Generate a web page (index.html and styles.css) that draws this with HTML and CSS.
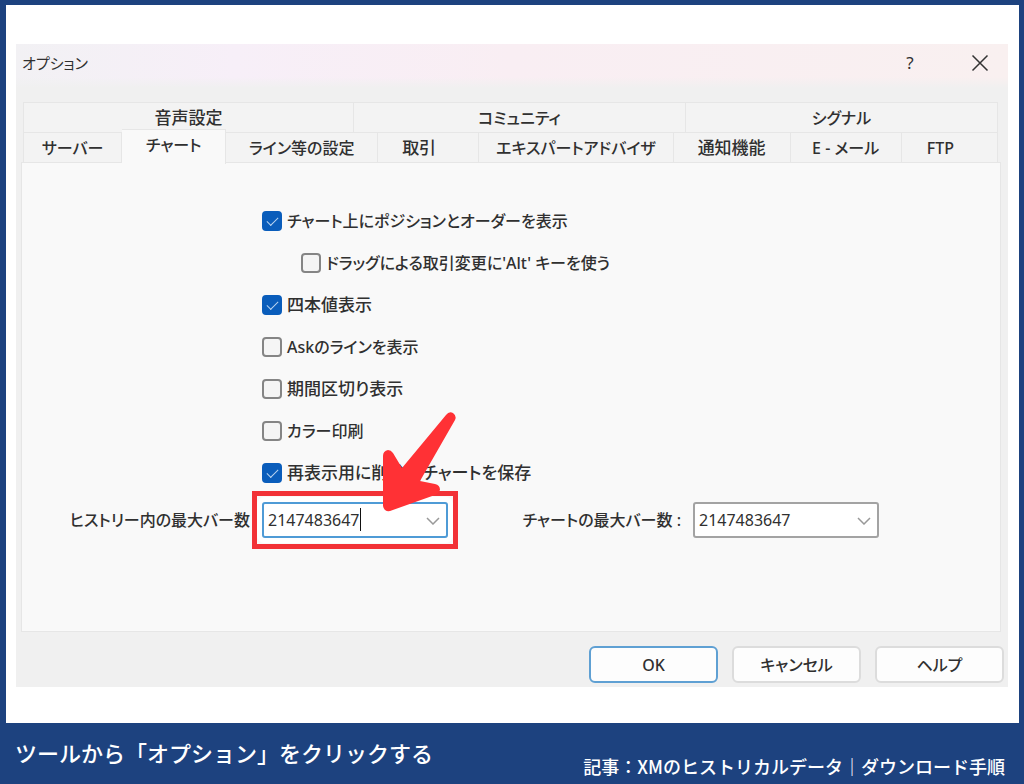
FILE: index.html
```html
<!DOCTYPE html>
<html lang="ja">
<head>
    <meta charset="UTF-8">
    <meta name="viewport" content="width=device-width, initial-scale=1.0">
    <title>オプション</title>
    <link rel="stylesheet" href="styles.css">
</head>
<body>
    <main class="frame">
        <section class="dialog">
            <header class="titlebar">
                <h1>オプション</h1>
                <button type="button" class="title-btn">?</button>
                <button type="button" class="title-btn" aria-label="閉じる">
                    <svg width="18" height="18" viewBox="0 0 18 18"><path d="M1.5 1.5L16.5 16.5M16.5 1.5L1.5 16.5"/></svg>
                </button>
            </header>

            <div class="tabs" role="tablist">
                <div class="tab-row">
                    <button type="button" role="tab" class="tab w-sound kanji">音声設定</button>
                    <button type="button" role="tab" class="tab w-community">コミュニティ</button>
                    <button type="button" role="tab" class="tab w-signal">シグナル</button>
                </div>
                <div class="tab-row">
                    <button type="button" role="tab" class="tab w-server">サーバー</button>
                    <button type="button" role="tab" class="tab w-chart active" aria-selected="true">チャート</button>
                    <button type="button" role="tab" class="tab w-line">ライン等の設定</button>
                    <button type="button" role="tab" class="tab w-trade kanji">取引</button>
                    <button type="button" role="tab" class="tab w-expert">エキスパートアドバイザ</button>
                    <button type="button" role="tab" class="tab w-notice kanji">通知機能</button>
                    <button type="button" role="tab" class="tab w-mail">E - メール</button>
                    <button type="button" role="tab" class="tab w-ftp">FTP</button>
                </div>
            </div>

            <div class="panel" role="tabpanel">
                <div class="checks">
                    <label class="check"><input type="checkbox" checked>チャート上にポジションとオーダーを表示</label>
                    <label class="check indent"><input type="checkbox">ドラッグによる取引変更に'Alt' キーを使う</label>
                    <label class="check kanji"><input type="checkbox" checked>四本値表示</label>
                    <label class="check"><input type="checkbox">Askのラインを表示</label>
                    <label class="check kanji"><input type="checkbox">期間区切り表示</label>
                    <label class="check"><input type="checkbox">カラー印刷</label>
                    <label class="check kanji"><input type="checkbox" checked>再表示用に削除済チャートを保存</label>
                </div>

                <label class="field-label" for="history-bars">ヒストリー内の最大バー数</label>
                <div class="combo focused">
                    <input type="text" id="history-bars" value="2147483647">
                    <span class="caret"></span>
                    <svg class="chevron" width="14" height="8" viewBox="0 0 14 8"><path d="M1 1L7 7L13 1"/></svg>
                    <svg class="arrow" width="76" height="104" viewBox="0 0 76 104">
                        <path d="M1 46Q1 41 6 40Q9 40 11 43L20 58L64 5Q67 1 71 3Q75 6 73 10L42 64L38 71L53 74Q58 75 58 80Q57 83 53 85L8 101Q2 102 1 96Z"/>
                    </svg>
                </div>
                <label class="field-label" for="chart-bars">チャートの最大バー数 :</label>
                <div class="combo">
                    <select id="chart-bars">
                        <option>2147483647</option>
                    </select>
                    <svg class="chevron" width="14" height="8" viewBox="0 0 14 8"><path d="M1 1L7 7L13 1"/></svg>
                </div>
            </div>

            <footer class="actions">
                <button type="button" class="btn primary">OK</button>
                <button type="button" class="btn">キャンセル</button>
                <button type="button" class="btn">ヘルプ</button>
            </footer>
        </section>
    </main>

    <footer class="caption">
        <p class="caption-text">ツールから「オプション」をクリックする</p>
        <p class="caption-source">記事：XMのヒストリカルデータ｜ダウンロード手順</p>
    </footer>
</body>
</html>
```

FILE: styles.css
```css
:root {
    --navy: #1d427f;
    --red: #ff3135;
    --text: #303030;
    --blue: #0a5dbb;
}

* {
    margin: 0;
    padding: 0;
    box-sizing: border-box;
}

body {
    min-height: 100vh;
    padding: 5px 5px 0 6px;
    background: var(--navy);
    color: var(--text);
    font-family: "Noto Sans", "Noto Sans CJK JP", sans-serif;
    font-size: 16px;
    line-height: 24px;
}

button,
input,
select {
    font: inherit;
    font-feature-settings: inherit;
    color: inherit;
}

.frame {
    padding: 39px 11px 36px 10px;
    background: #fff;
}

.dialog {
    background: #f0f0f0;
    font-feature-settings: "palt";
}

/* title bar */
.titlebar {
    display: flex;
    align-items: center;
    height: 44px;
    padding: 0 8px 6px 6px;
    margin-bottom: 14px;
    background:
        linear-gradient(transparent 75%, #f0f0f0),
        linear-gradient(90deg, #f2f1f4, #f7eff8 22%, #f9eef3 50%, #f9f0f0);
}

.titlebar h1 {
    flex: 1;
    font-size: 15px;
    font-weight: 400;
}

.title-btn {
    display: flex;
    align-items: center;
    justify-content: center;
    width: 40px;
    height: 36px;
    margin-left: 30px;
    border: none;
    background: none;
    font-size: 17px;
}

.title-btn svg {
    fill: none;
    stroke: #333;
    stroke-width: 1.5;
}

/* tabs */
.tabs {
    padding: 0 10px 0 7px;
}

.tab-row {
    display: flex;
    height: 30px;
}

.tab {
    flex-basis: 0;
    min-width: 0;
    border: 1px solid #e6e6e6;
    border-width: 1px 1px 0 0;
    background: #f3f3f3;
    font-weight: 500;
    line-height: 26px;
    white-space: nowrap;
}

.tab:first-child {
    border-left-width: 1px;
}

.tab.active {
    position: relative;
    height: 35px;
    margin-top: -3px;
    padding-bottom: 4px;
    background: #f9f9f9;
}

.kanji {
    font-size: 17px;
}

.w-sound { flex-grow: 330; }
.w-community { flex-grow: 332; }
.w-signal { flex-grow: 312; }
.w-server { flex-grow: 98; }
.w-chart { flex-grow: 104; }
.w-line { flex-grow: 152; }
.w-trade { flex-grow: 83; padding-right: 18px; }
.w-expert { flex-grow: 195; }
.w-notice { flex-grow: 117; }
.w-mail { flex-grow: 111; }
.w-ftp { flex-grow: 78; padding-right: 18px; }

/* chart settings */
.panel {
    display: grid;
    grid-template-columns: 240fr 186fr 245fr 186fr 121fr;
    align-items: center;
    margin: 0 7px 0 5px;
    padding: 37px 0 93px;
    border: 1px solid #e6e6e6;
    background: #f9f9f9;
    font-weight: 500;
}

.checks {
    grid-column: 2 / -1;
    margin-bottom: 8px;
}

.check {
    display: flex;
    align-items: center;
    gap: 5px;
    height: 42px;
    white-space: nowrap;
}

.check.indent {
    margin-left: 39px;
}

.check input {
    appearance: none;
    width: 20px;
    height: 20px;
    border: 2px solid #858585;
    border-radius: 4px;
    background: #f5f5f5;
}

.check input:checked {
    display: flex;
    align-items: center;
    justify-content: center;
    border-color: var(--blue);
    background: var(--blue);
}

.check input:checked::after {
    content: "";
    width: 10px;
    height: 5px;
    border: solid #b9d4f0;
    border-width: 0 0 1px 1px;
    transform: translateY(-1px) rotate(-45deg);
}

.field-label {
    padding-right: 12px;
    text-align: right;
    white-space: nowrap;
}

.combo {
    position: relative;
    height: 36px;
    border: 2px solid #a3a3a3;
    border-radius: 3px;
    background: #fff;
}

.combo input,
.combo select {
    appearance: none;
    width: 100%;
    height: 100%;
    padding: 0 28px 0 4px;
    border: none;
    outline: none;
    background: none;
    font-weight: 400;
}

.combo.focused {
    border-color: #4f9bd6;
    box-shadow: 0 0 0 5px #fff;
}

.combo.focused::before {
    content: "";
    position: absolute;
    inset: -13px -12px;
    border: 5px solid #f23237;
    pointer-events: none;
}

.caret {
    position: absolute;
    left: 96px;
    top: 4px;
    width: 1px;
    height: 23px;
    background: #111;
}

.chevron {
    position: absolute;
    right: 6px;
    top: 13px;
    fill: none;
    stroke: #999;
    stroke-width: 1.5;
    pointer-events: none;
}

.arrow {
    position: absolute;
    left: 118px;
    top: -94px;
    z-index: 2;
    fill: var(--red);
    pointer-events: none;
}

/* dialog buttons */
.actions {
    display: flex;
    justify-content: flex-end;
    gap: 14px;
    padding: 14px 4px 4px;
}

.btn {
    width: 129px;
    height: 37px;
    border: 2px solid #dcdcdc;
    border-radius: 6px;
    background: #fdfdfd;
    font-weight: 500;
}

.btn.primary {
    border-color: #5fa0d3;
}

/* caption */
.caption {
    display: flex;
    justify-content: space-between;
    padding: 17px 14px 0 9px;
    color: #fff;
    font-family: "Noto Sans CJK JP", sans-serif;
    font-weight: 500;
}

.caption-text {
    font-size: 22px;
}

.caption-source {
    padding-top: 14px;
    font-size: 18px;
}
```
